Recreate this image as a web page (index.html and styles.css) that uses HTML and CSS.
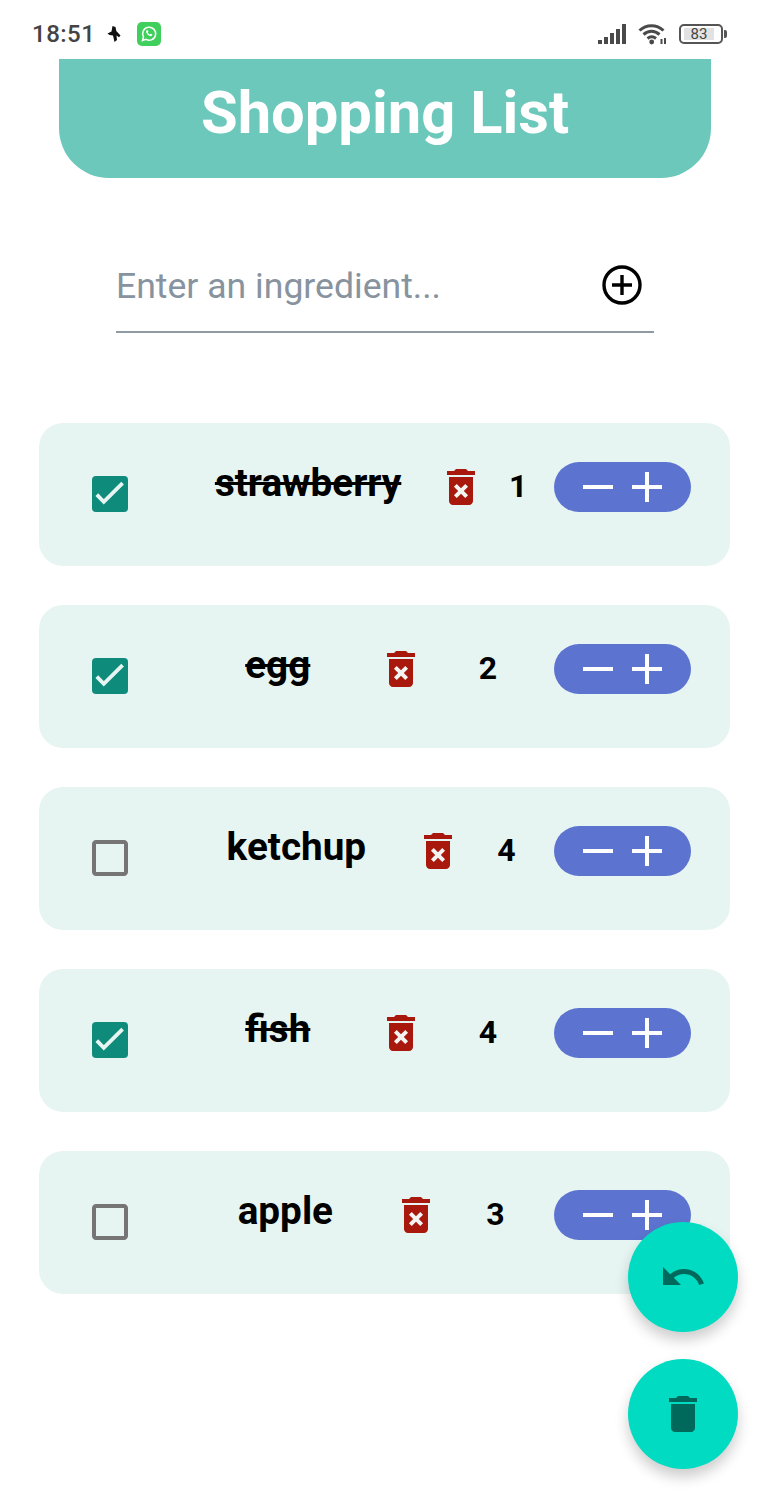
FILE: index.html
```html
<!DOCTYPE html>
<html lang="en">
<head>
    <meta charset="UTF-8">
    <meta name="viewport" content="width=device-width, initial-scale=1.0">
    <title>Shopping List</title>
    <link rel="stylesheet" href="styles.css">
</head>
<body>

<svg class="iconDefs" width="0" height="0">
    <symbol id="iconChecked" viewBox="0 0 24 24">
        <rect x="3" y="3" width="18" height="18" rx="2" fill="#0f8b7c"/>
        <path d="M5.400 12.300l3.500 3.600 9.400-9.300" fill="none" stroke="#e6f5f2" stroke-width="1.900"/>
    </symbol>
    <symbol id="iconUnchecked" viewBox="0 0 24 24">
        <path fill="#757575" d="M19 5v14H5V5h14m0-2H5c-1.100 0-2 .9-2 2v14c0 1.100.9 2 2 2h14c1.100 0 2-.9 2-2V5c0-1.100-.9-2-2-2z"/>
    </symbol>
    <symbol id="iconRemove" viewBox="0 0 24 24">
        <path fill="#a8180c" d="M6 19c0 1.100.9 2 2 2h8c1.100 0 2-.9 2-2V7H6v12zM15.500 4l-1-1h-5l-1 1H5v2h14V4z"/>
        <path fill="#f4f4f2" d="M8.460 11.880l1.410-1.410L12 12.590l2.120-2.120 1.410 1.410L13.410 14l2.120 2.120-1.410 1.410L12 15.410l-2.120 2.120-1.410-1.410L10.590 14l-2.130-2.120z"/>
    </symbol>
    <symbol id="iconMinus" viewBox="0 0 30 30">
        <rect y="13" width="30" height="4" fill="#fff"/>
    </symbol>
    <symbol id="iconPlus" viewBox="0 0 30 30">
        <path d="M0 13h13V0h4v13h13v4H17v13h-4V17H0z" fill="#fff"/>
    </symbol>
</svg>

<div class="page">
    <div class="statusBar">
        <div class="statusLeft">
            <span class="time">18:51</span>
            <svg class="birdIcon" width="14" height="18" viewBox="0 0 14 18">
                <path d="M5.500 1l3 1 .8 4 4.200 4.500-1.500 1.700-2.500-1.700 .5 4.500-2.500 2-1.500-6.500-3.500-.5-2-1.500 4-2z" fill="#111"/>
            </svg>
            <svg class="whatsApp" width="24" height="24" viewBox="0 0 24 24">
                <rect width="24" height="24" rx="5" fill="#3ecf5c"/>
                <path d="M5.500 18.500l1-3.600a6.500 6.500 0 1 1 2.500 2.500z" fill="none" stroke="#fff" stroke-width="1.500"/>
                <path d="M9.700 8.200c-1 .9-.7 2.300.5 3.900 1.300 1.600 2.800 2.400 4.100 2 .8-.3 1.100-1 1-1.500l-1.700-.9-.8.800c-.8-.3-1.600-1.100-2-2l.6-.8-.8-1.700z" fill="#fff"/>
            </svg>
        </div>
        <div class="statusRight">
            <div class="signal">
                <span class="bar1"></span>
                <span class="bar2"></span>
                <span class="bar3"></span>
                <span class="bar4"></span>
                <span class="bar5"></span>
            </div>
            <svg class="wifi" width="30" height="22" viewBox="0 0 30 22">
                <path d="M1.500 7.500c7-6.500 17-6.500 24 0M5.500 11.500c4.800-4.200 11.200-4.200 16 0M9.500 15.500c2.700-2.200 5.800-2.200 8.500 0" fill="none" stroke="#4a4a4a" stroke-width="3"/>
                <circle cx="13.700" cy="19" r="2.400" fill="#4a4a4a"/>
                <path d="M23.500 16v5M27 15v6" stroke="#4a4a4a" stroke-width="2"/>
            </svg>
            <div class="battery">
                <span class="batteryLevel">83</span>
            </div>
            <span class="batteryNub"></span>
        </div>
    </div>

    <div class="header">
        <h1>Shopping List</h1>
    </div>

    <div class="addRow">
        <input class="addInput" type="text" placeholder="Enter an ingredient...">
        <svg class="addIcon" width="48" height="48" viewBox="0 0 48 48">
            <circle cx="24" cy="24" r="18" fill="none" stroke="#000" stroke-width="3.400"/>
            <path d="M24 14v20M14 24h20" fill="none" stroke="#000" stroke-width="3.400"/>
        </svg>
    </div>

    <div class="list">
        <div class="item">
            <svg class="check" width="48" height="48"><use href="#iconChecked"/></svg>
            <div class="itemMain">
                <span class="itemName done">strawberry</span>
                <svg class="remove" width="48" height="48"><use href="#iconRemove"/></svg>
                <span class="qty">1</span>
            </div>
            <div class="stepper">
                <svg width="30" height="30"><use href="#iconMinus"/></svg>
                <svg width="30" height="30"><use href="#iconPlus"/></svg>
            </div>
        </div>
        <div class="item">
            <svg class="check" width="48" height="48"><use href="#iconChecked"/></svg>
            <div class="itemMain">
                <span class="itemName done">egg</span>
                <svg class="remove" width="48" height="48"><use href="#iconRemove"/></svg>
                <span class="qty">2</span>
            </div>
            <div class="stepper">
                <svg width="30" height="30"><use href="#iconMinus"/></svg>
                <svg width="30" height="30"><use href="#iconPlus"/></svg>
            </div>
        </div>
        <div class="item">
            <svg class="check" width="48" height="48"><use href="#iconUnchecked"/></svg>
            <div class="itemMain">
                <span class="itemName">ketchup</span>
                <svg class="remove" width="48" height="48"><use href="#iconRemove"/></svg>
                <span class="qty">4</span>
            </div>
            <div class="stepper">
                <svg width="30" height="30"><use href="#iconMinus"/></svg>
                <svg width="30" height="30"><use href="#iconPlus"/></svg>
            </div>
        </div>
        <div class="item">
            <svg class="check" width="48" height="48"><use href="#iconChecked"/></svg>
            <div class="itemMain">
                <span class="itemName done">fish</span>
                <svg class="remove" width="48" height="48"><use href="#iconRemove"/></svg>
                <span class="qty">4</span>
            </div>
            <div class="stepper">
                <svg width="30" height="30"><use href="#iconMinus"/></svg>
                <svg width="30" height="30"><use href="#iconPlus"/></svg>
            </div>
        </div>
        <div class="item">
            <svg class="check" width="48" height="48"><use href="#iconUnchecked"/></svg>
            <div class="itemMain">
                <span class="itemName">apple</span>
                <svg class="remove" width="48" height="48"><use href="#iconRemove"/></svg>
                <span class="qty">3</span>
            </div>
            <div class="stepper">
                <svg width="30" height="30"><use href="#iconMinus"/></svg>
                <svg width="30" height="30"><use href="#iconPlus"/></svg>
            </div>
        </div>
    </div>

    <div class="fabs">
        <div class="fab">
            <svg width="48" height="48" viewBox="0 0 24 24">
                <path d="M12.500 8c-2.650 0-5.050.990-6.900 2.600L2 7v9h9l-3.620-3.620c1.390-1.160 3.160-1.880 5.120-1.880 3.540 0 6.550 2.310 7.600 5.500l2.370-.780C21.080 11.030 17.150 8 12.500 8z"/>
            </svg>
        </div>
        <div class="fab">
            <svg width="48" height="48" viewBox="0 0 24 24">
                <path d="M6 19c0 1.100.9 2 2 2h8c1.100 0 2-.9 2-2V7H6v12zM19 4h-3.500l-1-1h-5l-1 1H5v2h14V4z"/>
            </svg>
        </div>
    </div>
</div>

</body>
</html>
```

FILE: styles.css
```css
* {
    box-sizing: border-box;
}
body {
    margin: 0;
    background-color: #fff;
    font-family: Roboto, sans-serif;
    color: #000;
}
.iconDefs {
    display: block;
    height: 0;
}
.page {
    position: relative;
    height: 1502px;
    overflow: hidden;
}
.statusBar {
    display: flex;
    justify-content: space-between;
    align-items: center;
    height: 59px;
    padding: 9px 42px 0 32px;
}
.statusLeft,
.statusRight {
    display: flex;
    align-items: center;
}
.time {
    font-size: 24px;
    font-weight: 500;
    letter-spacing: 0.5px;
    color: #444;
}
.birdIcon {
    margin-left: 12px;
}
.whatsApp {
    margin-left: 16px;
}
.signal {
    display: flex;
    align-items: flex-end;
    gap: 2px;
    height: 20px;
}
.signal span {
    width: 4px;
    background-color: #4a4a4a;
}
.bar1 { height: 4px; }
.bar2 { height: 7px; }
.bar3 { height: 11px; }
.bar4 { height: 15px; }
.bar5 { height: 20px; }
.wifi {
    margin-left: 12px;
}
.battery {
    display: flex;
    align-items: center;
    width: 44px;
    height: 20px;
    margin-left: 11px;
    padding: 0 2px;
    border: 2px solid #555;
    border-radius: 5px;
}
.batteryLevel {
    width: 30px;
    height: 12px;
    margin-left: 1px;
    background-color: #e2e2e2;
    font-size: 15px;
    line-height: 12px;
    text-align: center;
    color: #444;
}
.batteryNub {
    width: 3px;
    height: 8px;
    margin-left: 1px;
    border-radius: 0 2px 2px 0;
    background-color: #555;
}
.header {
    display: flex;
    justify-content: center;
    align-items: center;
    height: 119px;
    margin: 0 58px 0 59px;
    padding-bottom: 11px;
    border-radius: 0 0 50px 50px;
    background-color: #6bc8bb;
}
.header h1 {
    margin: 0;
    font-size: 59.7px;
    font-weight: 700;
    color: #fff;
}
.addRow {
    display: flex;
    justify-content: space-between;
    align-items: center;
    width: 538px;
    height: 84px;
    margin: 71px 0 0 116px;
    padding: 0 8px 10px 0;
    border-bottom: 2px solid #8f9aa3;
}
.addInput {
    flex: 1;
    min-width: 0;
    padding: 2px 0 0;
    border: none;
    outline: none;
    background: none;
    font-family: Roboto, sans-serif;
    font-size: 35.6px;
}
.addInput::placeholder {
    color: #87939e;
    opacity: 1;
}
.addIcon {
    display: block;
}
.list {
    display: flex;
    flex-direction: column;
    gap: 39px;
    margin: 90px 39px 0;
}
.item {
    display: flex;
    align-items: center;
    height: 143px;
    padding: 0 39px 0 47px;
    border-radius: 24px;
    background-color: #e7f5f2;
}
.check {
    flex: none;
    margin-top: -1px;
}
.itemMain {
    display: flex;
    flex: 1;
    justify-content: space-evenly;
    align-items: center;
    min-width: 0;
    margin: 0 0 16px 54px;
}
.itemName {
    margin-bottom: 8px;
    font-size: 38.7px;
    font-weight: 700;
}
.itemName.done {
    text-decoration: line-through;
}
.remove {
    flex: none;
    margin: 0 -3px 0 9px;
}
.qty {
    width: 18px;
    margin-bottom: 2px;
    font-size: 32px;
    font-weight: 700;
    text-align: center;
}
.stepper {
    display: flex;
    flex: none;
    justify-content: center;
    align-items: center;
    gap: 19px;
    width: 137px;
    height: 50px;
    margin-bottom: 16px;
    border-radius: 25px;
    background-color: #5c74cf;
}
.stepper svg {
    display: block;
}
.fabs {
    position: absolute;
    right: 31px;
    bottom: 33px;
    display: flex;
    flex-direction: column;
    gap: 27px;
}
.fab {
    display: flex;
    justify-content: center;
    align-items: center;
    width: 110px;
    height: 110px;
    border-radius: 50%;
    background-color: #00dbc1;
    box-shadow: 0 8px 14px rgba(0, 0, 0, 0.2);
}
.fab svg {
    fill: #00695c;
}
```
